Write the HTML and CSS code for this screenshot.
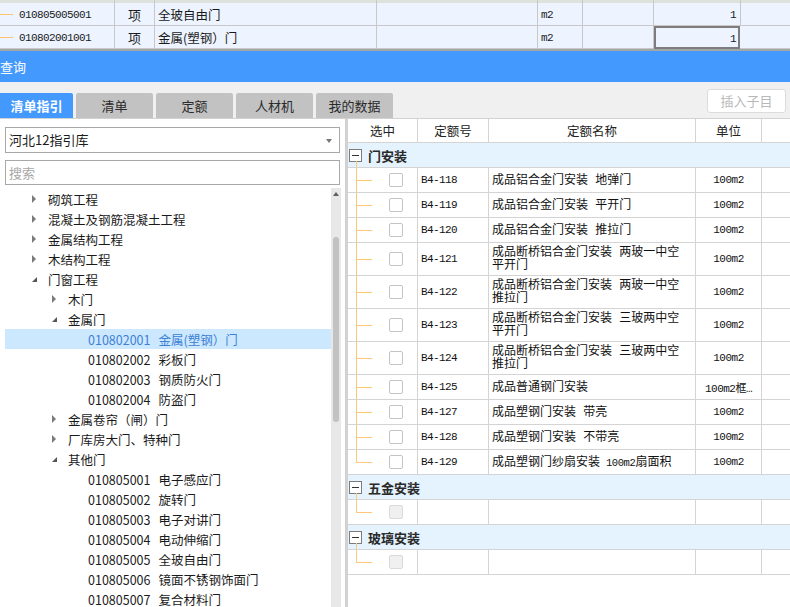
FILE: index.html
```html
<!DOCTYPE html>
<html lang="zh-CN">
<head>
<meta charset="utf-8">
<title>查询</title>
<link rel="stylesheet" href="styles.css">
</head>
<body>
<div class="app">
  <div class="top">
    <div class="trow strip"><div class="c"></div><div class="c"></div><div class="c"></div><div class="c"></div><div class="c"></div><div class="c"></div><div class="c"></div><div class="c"></div></div>
    <div class="trow">
      <div class="c code"><i class="dash"></i>010805005001</div>
      <div class="c center">项</div>
      <div class="c name">全玻自由门</div>
      <div class="c"></div>
      <div class="c mono">m2</div>
      <div class="c"></div>
      <div class="c mono num">1</div>
      <div class="c"></div>
    </div>
    <div class="trow">
      <div class="c code"><i class="dash"></i>010802001001</div>
      <div class="c center">项</div>
      <div class="c name">金属(塑钢）门</div>
      <div class="c"></div>
      <div class="c mono">m2</div>
      <div class="c"></div>
      <div class="c mono num active">1</div>
      <div class="c"></div>
    </div>
  </div>
  <div class="sep"></div>
  <div class="titlebar">查询</div>
  <div class="tabbar">
    <div class="tabs">
      <div class="tab on">清单指引</div>
      <div class="tab">清单</div>
      <div class="tab">定额</div>
      <div class="tab">人材机</div>
      <div class="tab">我的数据</div>
    </div>
    <div class="btn">插入子目</div>
  </div>
  <div class="main">
    <div class="left">
      <div class="select">河北12指引库<span class="caret"></span></div>
      <div class="search">搜索</div>
      <div class="treewrap">
        <div class="tree">
          <div class="node l1"><span class="arr closed"></span>砌筑工程</div>
          <div class="node l1"><span class="arr closed"></span>混凝土及钢筋混凝土工程</div>
          <div class="node l1"><span class="arr closed"></span>金属结构工程</div>
          <div class="node l1"><span class="arr closed"></span>木结构工程</div>
          <div class="node l1"><span class="arr open"></span>门窗工程</div>
          <div class="node l2"><span class="arr closed"></span>木门</div>
          <div class="node l2"><span class="arr open"></span>金属门</div>
          <div class="node l3 sel"><span class="cd">010802001</span>金属(塑钢）门</div>
          <div class="node l3"><span class="cd">010802002</span>彩板门</div>
          <div class="node l3"><span class="cd">010802003</span>钢质防火门</div>
          <div class="node l3"><span class="cd">010802004</span>防盗门</div>
          <div class="node l2"><span class="arr closed"></span>金属卷帘（闸）门</div>
          <div class="node l2"><span class="arr closed"></span>厂库房大门、特种门</div>
          <div class="node l2"><span class="arr open"></span>其他门</div>
          <div class="node l3"><span class="cd">010805001</span>电子感应门</div>
          <div class="node l3"><span class="cd">010805002</span>旋转门</div>
          <div class="node l3"><span class="cd">010805003</span>电子对讲门</div>
          <div class="node l3"><span class="cd">010805004</span>电动伸缩门</div>
          <div class="node l3"><span class="cd">010805005</span>全玻自由门</div>
          <div class="node l3"><span class="cd">010805006</span>镜面不锈钢饰面门</div>
          <div class="node l3"><span class="cd">010805007</span>复合材料门</div>
        </div>
        <div class="vscroll"><span class="up"></span><span class="thumb"></span></div>
      </div>
    </div>
    <div class="right">
      <div class="row head">
        <div class="cell">选中</div>
        <div class="cell">定额号</div>
        <div class="cell">定额名称</div>
        <div class="cell">单位</div>
        <div class="cell"></div>
      </div>
      <div class="group"><span class="box"></span>门安装</div>
      <div class="row"><div class="cell chk"><span class="cb"></span></div><div class="cell qno">B4-118</div><div class="cell qname">成品铝合金门安装 地弹门</div><div class="cell unit">100m2</div><div class="cell"></div></div>
      <div class="row"><div class="cell chk"><span class="cb"></span></div><div class="cell qno">B4-119</div><div class="cell qname">成品铝合金门安装 平开门</div><div class="cell unit">100m2</div><div class="cell"></div></div>
      <div class="row"><div class="cell chk"><span class="cb"></span></div><div class="cell qno">B4-120</div><div class="cell qname">成品铝合金门安装 推拉门</div><div class="cell unit">100m2</div><div class="cell"></div></div>
      <div class="row tall"><div class="cell chk"><span class="cb"></span></div><div class="cell qno">B4-121</div><div class="cell qname">成品断桥铝合金门安装 两玻一中空<br>平开门</div><div class="cell unit">100m2</div><div class="cell"></div></div>
      <div class="row tall"><div class="cell chk"><span class="cb"></span></div><div class="cell qno">B4-122</div><div class="cell qname">成品断桥铝合金门安装 两玻一中空<br>推拉门</div><div class="cell unit">100m2</div><div class="cell"></div></div>
      <div class="row tall"><div class="cell chk"><span class="cb"></span></div><div class="cell qno">B4-123</div><div class="cell qname">成品断桥铝合金门安装 三玻两中空<br>平开门</div><div class="cell unit">100m2</div><div class="cell"></div></div>
      <div class="row tall"><div class="cell chk"><span class="cb"></span></div><div class="cell qno">B4-124</div><div class="cell qname">成品断桥铝合金门安装 三玻两中空<br>推拉门</div><div class="cell unit">100m2</div><div class="cell"></div></div>
      <div class="row"><div class="cell chk"><span class="cb"></span></div><div class="cell qno">B4-125</div><div class="cell qname">成品普通钢门安装</div><div class="cell unit">100m2框…</div><div class="cell"></div></div>
      <div class="row"><div class="cell chk"><span class="cb"></span></div><div class="cell qno">B4-127</div><div class="cell qname">成品塑钢门安装 带亮</div><div class="cell unit">100m2</div><div class="cell"></div></div>
      <div class="row"><div class="cell chk"><span class="cb"></span></div><div class="cell qno">B4-128</div><div class="cell qname">成品塑钢门安装 不带亮</div><div class="cell unit">100m2</div><div class="cell"></div></div>
      <div class="row last"><div class="cell chk"><span class="cb"></span></div><div class="cell qno">B4-129</div><div class="cell qname">成品塑钢门纱扇安装<span class="lat">&nbsp;100m2</span>扇面积</div><div class="cell unit">100m2</div><div class="cell"></div></div>
      <div class="group"><span class="box"></span>五金安装</div>
      <div class="row last"><div class="cell chk"><span class="cb off"></span></div><div class="cell"></div><div class="cell"></div><div class="cell"></div><div class="cell"></div></div>
      <div class="group"><span class="box"></span>玻璃安装</div>
      <div class="row last"><div class="cell chk"><span class="cb off"></span></div><div class="cell"></div><div class="cell"></div><div class="cell"></div><div class="cell"></div></div>
    </div>
  </div>
</div>
</body>
</html>
```

FILE: styles.css
```css
* { box-sizing: border-box; }
html, body { margin: 0; padding: 0; }
body {
  width: 790px;
  height: 607px;
  overflow: hidden;
  background: #fff;
  font-family: "Noto Sans CJK SC", "DejaVu Sans", sans-serif;
  font-size: 12px;
  color: #1a1a1a;
}
.app { width: 790px; height: 607px; display: flex; flex-direction: column; }

/* top grid */
.top { background: #edf4ff; }
.trow {
  display: grid;
  grid-template-columns: 115px 40px 222px 161px 45px 71px 87px 1fr;
  height: 23px;
  border-bottom: 1px solid #c8c8c8;
}
.trow.strip { height: 3px; border-bottom: 0; background: #dde2dd; }
.trow .c {
  border-right: 1px solid #c8c8c8;
  display: flex;
  align-items: center;
  white-space: nowrap;
  position: relative;
}
.trow .c:last-child { border-right: 0; }
.trow .code {
  font-family: "Liberation Mono", monospace;
  font-size: 11px;
  letter-spacing: -0.6px;
  padding-left: 19px;
  padding-top: 2px;
}
.dash { position: absolute; left: 0; top: 11px; width: 13px; height: 1px; background: #ffc56e; }
.trow .center { justify-content: center; font-size: 13px; }
.trow .name { padding-left: 3px; font-size: 12.5px; }
.trow .mono { font-family: "Liberation Mono", monospace; font-size: 11px; letter-spacing: -0.6px; padding-left: 3px; padding-top: 2px; }
.trow .num { justify-content: flex-end; padding-right: 4px; }
.trow .active { box-shadow: inset 0 0 0 2px #7d7d7d; border-right-color: transparent; margin-bottom: -1px; }
.sep { height: 2px; background: #a5a5a5; }

.titlebar {
  height: 31px;
  background: #4499ff;
  color: #fff;
  font-size: 13px;
  line-height: 31px;
}

.tabbar {
  height: 37px;
  background: #f0f0f0;
  border-bottom: 1px solid #d2d2d2;
  display: flex;
  justify-content: space-between;
}
.tabs { display: flex; gap: 3px; padding-top: 11px; }
.tab {
  width: 77px;
  height: 25px;
  background: #c2c2c2;
  border-radius: 2px 2px 0 0;
  font-size: 13px;
  color: #2a2a2a;
  text-align: center;
  line-height: 25px;
}
.tab.on { width: 73px; background: #4499ff; color: #fff; font-weight: bold; border-radius: 0 2px 0 0; }
.btn {
  margin: 7px 4px 0 0;
  width: 79px;
  height: 24px;
  background: #fff;
  border: 1px solid #dcdcdc;
  border-radius: 3px;
  color: #b8b8b8;
  font-size: 13px;
  text-align: center;
  line-height: 22px;
}

/* main */
.main { flex: 1; display: flex; min-height: 0; }
.left {
  width: 346px;
  border-right: 1px solid #d0d0d0;
  padding: 8px 0 0 5px;
  display: flex;
  flex-direction: column;
}
.select {
  width: 335px;
  height: 26px;
  border: 1px solid #a8a8a8;
  font-size: 13px;
  line-height: 24px;
  padding-left: 3px;
  position: relative;
  color: #1a1a1a;
}
.caret {
  position: absolute;
  right: 7px;
  top: 11px;
  border-top: 4px solid #777;
  border-left: 3.5px solid transparent;
  border-right: 3.5px solid transparent;
}
.search {
  margin-top: 7px;
  width: 335px;
  height: 25px;
  border: 1px solid #a8a8a8;
  font-size: 13px;
  line-height: 23px;
  padding-left: 3px;
  color: #a8a8a8;
}
.treewrap { margin-top: 3px; flex: 1; display: flex; min-height: 0; overflow: hidden; }
.tree { width: 326px; padding-top: 1px; }
.node {
  height: 20px;
  display: flex;
  align-items: center;
  font-size: 12.5px;
  white-space: nowrap;
  color: #1a1a1a;
}
.node.l1 { padding-left: 27px; }
.node.l2 { padding-left: 47px; }
.node.l3 { padding-left: 83px; }
.node.sel { background: #cce8ff; color: #3d80d6; }
.arr { width: 16px; height: 20px; position: relative; flex: none; }
.arr.closed::before {
  content: "";
  position: absolute;
  left: 0;
  top: 6px;
  border-left: 4px solid #7a7a7a;
  border-top: 4px solid transparent;
  border-bottom: 4px solid transparent;
}
.arr.open::before {
  content: "";
  position: absolute;
  left: 0;
  top: 8px;
  border-right: 5px solid #555;
  border-top: 5px solid transparent;
}
.cd { margin-right: 8px; }
.vscroll {
  width: 10px;
  background: #e8e8e8;
  position: relative;
}
.up {
  position: absolute;
  left: 2px;
  top: 4px;
  border-bottom: 4px solid #5f5f5f;
  border-left: 3px solid transparent;
  border-right: 3px solid transparent;
}
.thumb {
  position: absolute;
  left: 2px;
  top: 49px;
  width: 6px;
  height: 185px;
  background: #c2c2c2;
  border-radius: 3px;
}

/* right table */
.right {
  flex: 1;
  border-left: 2px solid #d2d2d2;
  background: #fff;
}
.row {
  display: grid;
  grid-template-columns: 70px 71px 207px 66px 1fr;
  height: 25px;
  border-bottom: 1px solid #d4d4d4;
}
.row.tall { height: 33px; }
.row .cell {
  border-right: 1px solid #d4d4d4;
  display: flex;
  align-items: center;
  white-space: nowrap;
  overflow: hidden;
}
.row .cell:last-child { border-right: 0; }
.row.head { height: 24px; }
.row.head .cell { justify-content: center; font-size: 12.5px; color: #222; }
.cell.chk { position: relative; overflow: visible; }
.cell.chk::before {
  content: "";
  position: absolute;
  left: 8px;
  top: 0;
  bottom: 0;
  width: 1px;
  background: #ffc77a;
}
.row.last .cell.chk::before { bottom: 50%; }
.cell.chk::after {
  content: "";
  position: absolute;
  left: 8px;
  top: 50%;
  width: 16px;
  height: 1px;
  background: #ffc77a;
}
.cb {
  margin-left: 41px;
  width: 14px;
  height: 14px;
  border: 1px solid #c4c4c4;
  border-radius: 2px;
  background: #fff;
}
.cb.off { background: #f0f0f0; border-color: #dadada; }
.qno {
  font-family: "Liberation Mono", monospace;
  font-size: 11px;
  letter-spacing: -0.6px;
  padding-left: 3px;
  color: #111;
}
.qname {
  padding-left: 3px;
  padding-top: 2px;
  font-family: "Liberation Mono", "Noto Sans CJK SC", monospace;
  font-size: 12px;
  line-height: 13px;
  color: #111;
}
.qname .lat { font-size: 10.5px; letter-spacing: -0.4px; }
.row.tall .qname { align-items: flex-start; padding-top: 4px; }
.unit {
  justify-content: center;
  font-family: "Liberation Mono", "Noto Sans CJK SC", monospace;
  font-size: 11px;
  letter-spacing: -0.5px;
  color: #111;
}
.group {
  height: 25px;
  background: #e5f3ff;
  border-bottom: 1px solid #d4d4d4;
  display: flex;
  align-items: center;
  font-size: 13px;
  font-weight: bold;
  color: #2a2a2a;
  position: relative;
  padding-left: 1px;
}
.box {
  width: 13px;
  height: 13px;
  border: 1px solid #7c7c7c;
  background: #fff;
  margin-right: 6px;
  position: relative;
}
.box::before {
  content: "";
  position: absolute;
  left: 2px;
  right: 2px;
  top: 5px;
  height: 1px;
  background: #333;
}
.group::after {
  content: "";
  position: absolute;
  left: 8px;
  top: 18px;
  bottom: 0;
  width: 1px;
  background: #ffc77a;
}
```
